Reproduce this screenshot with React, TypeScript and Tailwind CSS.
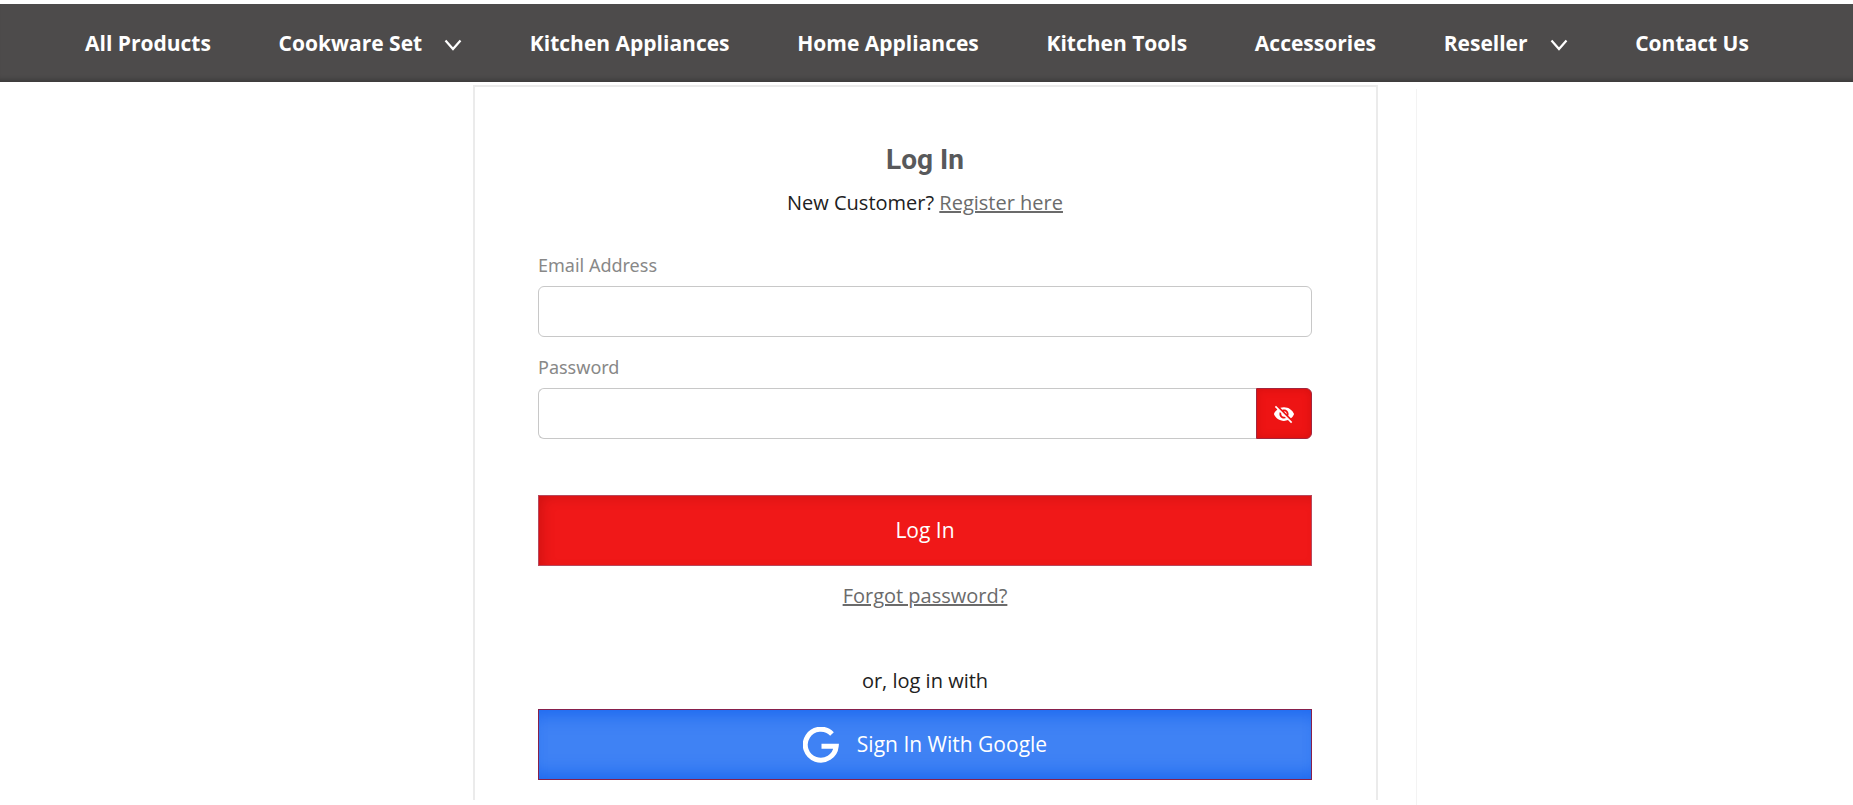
import React, { useState } from 'react';
import { MdVisibility, MdVisibilityOff } from 'react-icons/md';

interface NavItem {
  label: string;
  hasMenu?: boolean;
}

const NAV_ITEMS: NavItem[] = [
  { label: 'All Products' },
  { label: 'Cookware Set', hasMenu: true },
  { label: 'Kitchen Appliances' },
  { label: 'Home Appliances' },
  { label: 'Kitchen Tools' },
  { label: 'Accessories' },
  { label: 'Reseller', hasMenu: true },
  { label: 'Contact Us' },
];

const Chevron: React.FC = () => (
  <svg className="w-[18px] h-3 mt-0.5 shrink-0" viewBox="0 0 18 12" fill="none" stroke="currentColor" strokeWidth="2.2">
    <path d="M1.5 1.5 9 10l7.5-8.5" />
  </svg>
);

const GoogleMark: React.FC = () => (
  <svg className="w-9 h-9 shrink-0" viewBox="0 0 36 36" fill="none" stroke="currentColor" strokeWidth="5">
    <path d="M29 7A15.5 15.5 0 1 0 33.2 19.2H18.5" />
  </svg>
);

const NavBar: React.FC = () => (
  <nav className="h-[78px] bg-[#4d4b4b] shadow-[inset_0_-6px_5px_-4px_rgba(0,0,0,0.25)] pt-0.5 pl-[85px] pr-[104px] flex items-center justify-between text-white text-[21px] font-bold">
    {NAV_ITEMS.map((item) => (
      <a key={item.label} href="#" className="flex items-center gap-[22px] whitespace-nowrap">
        {item.label}
        {item.hasMenu && <Chevron />}
      </a>
    ))}
  </nav>
);

const LoginForm: React.FC = () => {
  const [showPassword, setShowPassword] = useState(false);

  return (
    <form
      className="w-full max-w-[905px] self-start border-2 border-b-0 border-[#ebebeb] pl-[63px] pr-16 pt-[55px] pb-5 text-center text-xl"
      onSubmit={(e) => e.preventDefault()}
    >
      <h1 className="text-[28px] leading-9 font-bold text-[#58595b] font-['Roboto',sans-serif]">Log In</h1>
      <p className="mt-[11px] leading-7 text-[#212121]">
        New Customer? <a href="#" className="text-[#6b6b6b] underline">Register here</a>
      </p>

      <div className="mt-9 text-left text-lg leading-6 text-[#888] font-['Noto_Sans',sans-serif]">
        <label htmlFor="email" className="block">Email Address</label>
        <input id="email" type="email" className="mt-[9px] block w-full h-[51px] px-4 rounded-md border border-[#c8c8c8] bg-white" />
        <label htmlFor="password" className="block mt-[18px]">Password</label>
        <div className="mt-[9px] flex">
          <input
            id="password"
            type={showPassword ? 'text' : 'password'}
            className="flex-1 min-w-0 h-[51px] px-4 rounded-l-md border border-r-0 border-[#c8c8c8] bg-white"
          />
          <button
            type="button"
            aria-label="Show password"
            onClick={() => setShowPassword(!showPassword)}
            className="w-14 h-[51px] flex items-center justify-center rounded-r-md border border-[#a3253c] bg-[#ee1414] shadow-[inset_0_0_8px_rgba(140,0,0,0.25)] text-white"
          >
            {showPassword ? <MdVisibility className="w-[22px] h-[22px]" /> : <MdVisibilityOff className="w-[22px] h-[22px]" />}
          </button>
        </div>
      </div>

      <button
        type="submit"
        className="mt-14 w-full h-[71px] border border-[#b8485c] bg-[#f01818] shadow-[inset_6px_4px_14px_-4px_rgba(120,0,0,0.3)] text-[21px] text-white"
      >
        Log In
      </button>
      <a href="#" className="mt-4 inline-block leading-7 text-[#6b6b6b] underline">Forgot password?</a>

      <p className="mt-[57px] leading-7 text-[#212121]">or, log in with</p>
      <button
        type="button"
        className="mt-[14px] w-full h-[71px] flex items-center justify-center gap-[18px] border border-[#86204c] bg-[#3f82f4] shadow-[inset_0_16px_16px_-10px_#1f6af0,inset_0_-16px_16px_-10px_#1f6af0] text-[21px] text-white"
      >
        <GoogleMark />
        Sign In With Google
      </button>
    </form>
  );
};

export default function App() {
  return (
    <div className="min-h-screen bg-white pt-1 flex flex-col font-['Open_Sans',sans-serif]">
      <NavBar />
      <main className="flex-1 pt-[3px] pr-0.5 flex">
        <div className="flex-1" />
        <LoginForm />
        <div className="flex-1 pt-1 flex">
          <div className="flex-1 ml-[38px] border-l border-[#f3f3f3]" />
        </div>
      </main>
    </div>
  );
}
